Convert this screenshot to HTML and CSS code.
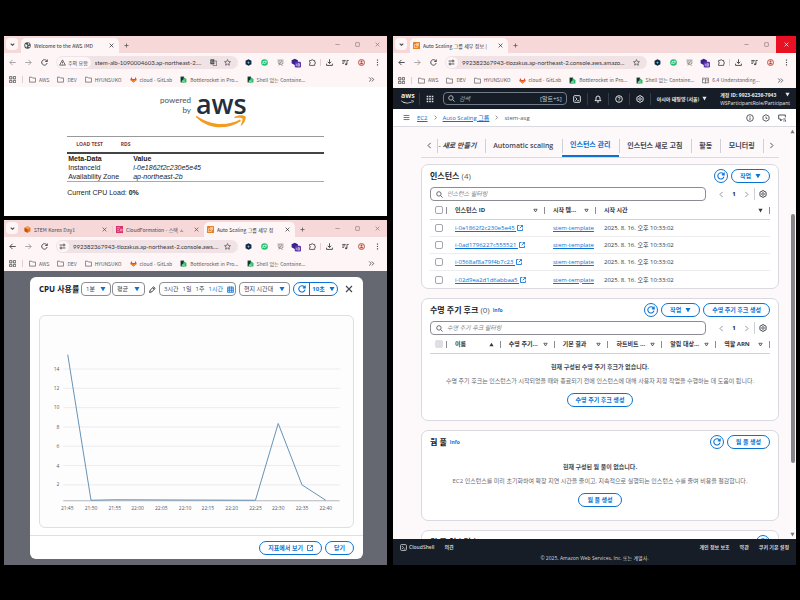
FILE: index.html
```html
<!DOCTYPE html>
<html lang="ko">
<head>
<meta charset="utf-8">
<title>Auto Scaling 모니터링</title>
<link rel="stylesheet" href="styles.css">
</head>
<body>
<svg class="sprite" aria-hidden="true">
  <symbol id="chev" viewBox="0 0 12 12"><path d="M3 4.5l3 3 3-3" fill="none" stroke="currentColor" stroke-width="1.8"/></symbol>
  <symbol id="left" viewBox="0 0 12 12"><path d="M8 1.5L3.5 6 8 10.500" fill="none" stroke="currentColor" stroke-width="1.6"/></symbol>
  <symbol id="right" viewBox="0 0 12 12"><path d="M4 1.500L8.500 6 4 10.500" fill="none" stroke="currentColor" stroke-width="1.600"/></symbol>
  <symbol id="x" viewBox="0 0 12 12"><path d="M1.500 1.500l9 9M10.500 1.500l-9 9" fill="none" stroke="currentColor" stroke-width="1.700"/></symbol>
  <symbol id="plus" viewBox="0 0 12 12"><path d="M6 1v10M1 6h10" fill="none" stroke="currentColor" stroke-width="1.600"/></symbol>
  <symbol id="min" viewBox="0 0 12 12"><path d="M1 6h10" fill="none" stroke="currentColor" stroke-width="1.500"/></symbol>
  <symbol id="max" viewBox="0 0 12 12"><rect x="1.500" y="1.500" width="9" height="9" rx="1" fill="none" stroke="currentColor" stroke-width="1.500"/></symbol>
  <symbol id="back" viewBox="0 0 12 12"><path d="M11.500 6H1.500M6 1.500L1.500 6 6 10.500" fill="none" stroke="currentColor" stroke-width="1.600"/></symbol>
  <symbol id="fwd" viewBox="0 0 12 12"><path d="M.5 6h10M6 1.500L10.500 6 6 10.500" fill="none" stroke="currentColor" stroke-width="1.600"/></symbol>
  <symbol id="reload" viewBox="0 0 12 12"><path d="M10.500 7A4.700 4.700 0 1 1 9.500 2.800L10.500 4M10.800 .8V4.300H7.300" fill="none" stroke="currentColor" stroke-width="1.600"/></symbol>
  <symbol id="globe" viewBox="0 0 12 12"><circle cx="6" cy="6" r="5.500" fill="#474b50"/><path d="M2 3.500l3 1 1 2-1.500 1.500v2L2.500 8zM7 1.500l2.500 1.500-1 1.500-2-.5zM8 6.500l2.500.5-1.500 2.500-1.500-1z" fill="#fff"/></symbol>
  <symbol id="warn" viewBox="0 0 12 12"><path d="M6 1.500L11 10.500H1zM6 4.500v3M6 8.200v1.200" fill="none" stroke="currentColor" stroke-width="1.300"/></symbol>
  <symbol id="tune" viewBox="0 0 12 12"><path d="M1 3.500h5M6 8.500h5" stroke="currentColor" stroke-width="1.500"/><circle cx="8.500" cy="3.500" r="1.700" fill="none" stroke="currentColor" stroke-width="1.500"/><circle cx="3.500" cy="8.500" r="1.700" fill="none" stroke="currentColor" stroke-width="1.500"/></symbol>
  <symbol id="translate" viewBox="0 0 12 12"><rect x=".5" y=".5" width="7" height="8.500" rx="1" fill="#474b50"/><path d="M8 3.500h3.500v8H5.500L5 9.500" fill="none" stroke="#474b50" stroke-width="1.200"/><path d="M5.500 3.500A2 2 0 1 0 5.800 5H4.200M7.500 6h3M9 5v1M8 9.500l2.500-3" fill="none" stroke="#ccc" stroke-width=".9"/></symbol>
  <symbol id="star" viewBox="0 0 12 12"><path d="M6 1l1.500 3.300 3.600.4-2.700 2.400.8 3.600L6 8.900l-3.200 1.800.8-3.600L.9 4.700l3.600-.4z" fill="none" stroke="currentColor" stroke-width="1.200"/></symbol>
  <symbol id="e1" viewBox="0 0 12 12"><path d="M6 .5l5 2.500v6L6 11.500 1 9V3z" fill="#10283f"/><path d="M6 3.500l1 2 2 .5-2 1-1 2-1-2-2-1 2-.5z" fill="#6fb1d8"/></symbol>
  <symbol id="e2" viewBox="0 0 12 12"><circle cx="6" cy="6" r="5.700" fill="#20c070"/><path d="M3 8.500C3 5 5 3.500 9 3.500 9 7 7 8.500 4.500 7.500M3 4.500h2" fill="none" stroke="#fff" stroke-width="1.300"/></symbol>
  <symbol id="e3" viewBox="0 0 12 12"><path d="M1 2h10M1 5h4M7 5h4M3 11l4-7M2 7l8 4M8 8l3-1" fill="none" stroke="#666" stroke-width="1.200"/></symbol>
  <symbol id="e4" viewBox="0 0 16 16"><path d="M6 1l5 2.500v5L6 11 1 8.500v-5z" fill="#37228b"/><rect x="6" y="6" width="10" height="9" rx="2" fill="#5a35a8"/><path d="M8.500 9v4M11 9h2.500v4H11zM11 11h2.500" fill="none" stroke="#e7dcff" stroke-width="1"/></symbol>
  <symbol id="puzzle" viewBox="0 0 12 12"><path d="M1 2.500h3C4 .5 7 .5 7 2.500h2.800v3c2 0 2 2.500 0 2.500v3H1V8c2 0 2-2.500 0-2.500z" fill="none" stroke="currentColor" stroke-width="1.400"/></symbol>
  <symbol id="down" viewBox="0 0 12 12"><path d="M6 .5v7M3 4.800L6 7.700l3-2.900M1 8v3h10V8" fill="none" stroke="currentColor" stroke-width="1.600"/></symbol>
  <symbol id="music" viewBox="0 0 12 12"><path d="M.5 2.500h6M.5 5h5M.5 7.500h3M8.500 9V2.500h3" fill="none" stroke="currentColor" stroke-width="1.500"/><circle cx="7" cy="9" r="1.800" fill="currentColor"/></symbol>
  <symbol id="me" viewBox="0 0 12 12"><circle cx="6" cy="6" r="5.200" fill="#f6dcd6" stroke="#bd3d35" stroke-width="1.400"/><circle cx="6" cy="4.200" r="1.500" fill="#bd3d35"/><path d="M3.500 9c0-3.500 5-3.500 5 0z" fill="#bd3d35"/></symbol>
  <symbol id="dots" viewBox="0 0 12 12"><path d="M5 1h2v2H5zM5 5h2v2H5zM5 9h2v2H5z" fill="currentColor"/></symbol>
  <symbol id="apps" viewBox="0 0 12 12"><path d="M1 1h4v4H1zM7.500 1h4v4h-4zM1 7.500h4v4H1zM7.500 7.500h4v4h-4z" fill="none" stroke="currentColor" stroke-width="1.300"/></symbol>
  <symbol id="folder" viewBox="0 0 12 12"><path d="M.7 2h4l1.300 1.500h5.300v7H.7z" fill="none" stroke="currentColor" stroke-width="1.200"/></symbol>
  <symbol id="gitlab" viewBox="0 0 12 12"><path d="M6 11L.5 7 2.300 1.500 4 5h4l1.700-3.500L11.500 7z" fill="#e2432a"/><path d="M6 11L1 7l3-1 2 2 2-2 3 1z" fill="#f88a26"/></symbol>
  <symbol id="bottle" viewBox="0 0 12 12"><path d="M1 1h6v10H1z" fill="#14332a"/><path d="M6 2l5 3v6H5z" fill="#29b765"/><path d="M3 8l5-3v6H3z" fill="#6bdc8f"/></symbol>
  <symbol id="book" viewBox="0 0 12 12"><path d="M6 2.500C4.500 1.500 2.500 1.500.7 2v8c1.800-.5 3.800-.5 5.300.5 1.500-1 3.500-1 5.300-.5V2C9.500 1.500 7.500 1.500 6 2.500zM6 2.500v8M8 4.500h2M8 6.500h2M2 4.500h2" fill="none" stroke="currentColor" stroke-width="1.200"/></symbol>
  <symbol id="more" viewBox="0 0 12 12"><path d="M2 2.500L5.500 6 2 9.500M6.500 2.500L10 6 6.500 9.500" fill="none" stroke="currentColor" stroke-width="1.400"/></symbol>
  <symbol id="ec2" viewBox="0 0 12 12"><rect width="12" height="12" rx="1" fill="#e98023"/><path d="M2.500 4.500h5v5h-5zM5 2.500h4.500V7M5 7l4-4" fill="none" stroke="#fff3e2" stroke-width="1"/></symbol>
  <symbol id="cfn" viewBox="0 0 12 12"><rect width="12" height="12" fill="#d6336c"/><path d="M2 3h5M2 6h3M2 9h4M7.500 5.500h3v3h-3z" fill="none" stroke="#ffd0de" stroke-width="1"/></symbol>
  <symbol id="cube" viewBox="0 0 12 12"><path d="M6 .5l5 2.500v6L6 11.500 1 9V3z" fill="#e4781a"/><path d="M1 3l5 2.500L11 3 6 .5z" fill="#f5a33f"/><path d="M6 5.500v6L1 9V3z" fill="#c94c18"/></symbol>
  <symbol id="grid9" viewBox="0 0 12 12"><path d="M1 1h2.400v2.400H1zM4.800 1h2.400v2.400H4.800zM8.600 1H11v2.400H8.600zM1 4.800h2.400v2.400H1zM4.800 4.800h2.400v2.400H4.800zM8.600 4.800H11v2.400H8.600zM1 8.600h2.400V11H1zM4.800 8.600h2.400V11H4.800zM8.600 8.600H11V11H8.600z" fill="currentColor"/></symbol>
  <symbol id="search" viewBox="0 0 12 12"><circle cx="5" cy="5" r="3.800" fill="none" stroke="currentColor" stroke-width="1.500"/><path d="M7.800 7.800l3.500 3.500" stroke="currentColor" stroke-width="1.500"/></symbol>
  <symbol id="shell" viewBox="0 0 12 12"><rect x="1" y="1" width="10" height="10" rx="1.500" fill="none" stroke="currentColor" stroke-width="1.400"/><path d="M3.500 3.500L6 6 3.500 8.500M6.500 8.500h2.500" fill="none" stroke="currentColor" stroke-width="1.300"/></symbol>
  <symbol id="bell" viewBox="0 0 12 12"><path d="M1.500 8.500L3 6.500V4.500a3 3 0 0 1 6 0v2l1.500 2zM4.500 10.500h3" fill="none" stroke="currentColor" stroke-width="1.500"/></symbol>
  <symbol id="help" viewBox="0 0 12 12"><circle cx="6" cy="6" r="5" fill="none" stroke="currentColor" stroke-width="1.400"/><path d="M4.300 4.700c0-2.200 3.500-2 3.500 0C7.800 6 6 5.800 6 7.200M6 8.200v1.200" fill="none" stroke="currentColor" stroke-width="1.300"/></symbol>
  <symbol id="gear" viewBox="0 0 12 12"><path d="M6 .8l4.600 2.600v5.200L6 11.200 1.400 8.600V3.400z" fill="none" stroke="currentColor" stroke-width="1.500" stroke-linejoin="round"/><circle cx="6" cy="6" r="1.900" fill="none" stroke="currentColor" stroke-width="1.300"/></symbol>
  <symbol id="menu" viewBox="0 0 12 12"><path d="M1 2.500h10M1 6h10M1 9.500h10" stroke="currentColor" stroke-width="1.400"/></symbol>
  <symbol id="info" viewBox="0 0 12 12"><circle cx="6" cy="6" r="5" fill="none" stroke="currentColor" stroke-width="1.300"/><path d="M6 5.200V9M6 3v1.300" stroke="currentColor" stroke-width="1.300"/></symbol>
  <symbol id="clock" viewBox="0 0 12 12"><path d="M6 1l4.500 2.500v5L6 11 1.500 8.500v-5zM6 4v2.500h2" fill="none" stroke="currentColor" stroke-width="1.300"/></symbol>
  <symbol id="feedback" viewBox="0 0 12 12"><path d="M11 5V1.500H1v6h3v3l2.500-3M8 7.500h3.500M8 10.500h1.500M11 9v2.500" fill="none" stroke="currentColor" stroke-width="1.400"/></symbol>
  <symbol id="tri" viewBox="0 0 12 12"><path d="M1 2h10L6 10.500z" fill="currentColor"/></symbol>
  <symbol id="triup" viewBox="0 0 12 12"><path d="M1 10h10L6 1.500z" fill="currentColor"/></symbol>
  <symbol id="trio" viewBox="0 0 12 12"><path d="M2 3h8L6 9.500z" fill="none" stroke="currentColor" stroke-width="1.800"/></symbol>
  <symbol id="ext" viewBox="0 0 12 12"><path d="M5 1H1v10h10V7M7 1h4v4M11 1L5.500 6.500" fill="none" stroke="currentColor" stroke-width="1.700"/></symbol>
  <symbol id="pen" viewBox="0 0 12 12"><path d="M1 11l1-4L8 1.500 10.500 4 5 10zM6.500 3l2.500 2.500" fill="none" stroke="currentColor" stroke-width="1.400"/></symbol>
  <symbol id="cal" viewBox="0 0 12 12"><path d="M1 2h10v9H1zM1 5h10M4 .5v10M8 .5v10M1 8h10" fill="none" stroke="currentColor" stroke-width="1.300"/></symbol>
  <symbol id="smile" viewBox="0 0 51 13"><path d="M1 1C15 11 32 11 44 4.500l1 1.500C32 15 13 15 .3 2.500-.2 1.500.3.500 1 1z" fill="currentColor"/><path d="M38.500 2c4-2.500 9-2 11-.5 1 2-1 6.500-4 9-.8.500-1 0-.7-.7 1-2.300 2.300-5 1.500-6.300-1-1-4-.8-7-.5-.9 0-1.200-.6-.8-1z" fill="currentColor"/></symbol>
</svg>

<main class="desktop">
  <div class="column">
    <section class="window imd">
      <header class="chrome">
        <div class="tabstrip">
          <button class="tabmenu" aria-label="탭 검색"><svg><use href="#chev"/></svg></button>
          <div class="tab active"><svg><use href="#globe"/></svg><span>Welcome to the AWS IMD</span><button aria-label="탭 닫기"><svg><use href="#x"/></svg></button></div>
          <button class="newtab" aria-label="새 탭"><svg><use href="#plus"/></svg></button>
          <div class="winctl"><button aria-label="최소화"><svg><use href="#min"/></svg></button><button aria-label="최대화"><svg><use href="#max"/></svg></button><button aria-label="닫기"><svg><use href="#x"/></svg></button></div>
        </div>
        <div class="toolbar">
          <button class="dim" aria-label="뒤로"><svg><use href="#back"/></svg></button><button class="dim" aria-label="앞으로"><svg><use href="#fwd"/></svg></button><button aria-label="새로고침"><svg><use href="#reload"/></svg></button>
          <div class="url"><span class="chip"><svg><use href="#warn"/></svg>주의 요함</span><input aria-label="주소" value="stem-alb-1090004603.ap-northeast-2...."><svg><use href="#translate"/></svg><svg><use href="#star"/></svg></div>
          <button aria-label="확장 1"><svg><use href="#e1"/></svg></button><button aria-label="확장 2"><svg><use href="#e2"/></svg></button><button aria-label="확장 3"><svg><use href="#e3"/></svg></button><button class="wide" aria-label="확장 4"><svg><use href="#e4"/></svg></button><button aria-label="확장 프로그램"><svg><use href="#puzzle"/></svg></button><i class="sep"></i><button aria-label="다운로드"><svg><use href="#down"/></svg></button><button aria-label="미디어"><svg><use href="#music"/></svg></button><button aria-label="프로필"><svg><use href="#me"/></svg></button><button aria-label="메뉴"><svg><use href="#dots"/></svg></button>
        </div>
        <nav class="bookmarks">
          <svg><use href="#apps"/></svg><i class="sep"></i>
          <a href="#"><svg><use href="#folder"/></svg>AWS</a><a href="#"><svg><use href="#folder"/></svg>DEV</a><a href="#"><svg><use href="#folder"/></svg>HYUNSUKO</a><a href="#"><svg><use href="#gitlab"/></svg>cloud · GitLab</a><a href="#"><svg><use href="#bottle"/></svg>Bottlerocket in Pro...</a><a href="#"><svg><use href="#bottle"/></svg>Shell 없는 Containe...</a>
          <svg class="last"><use href="#more"/></svg>
        </nav>
      </header>
      <div class="imd-page">
        <div class="brand"><span class="powered">powered<br>by</span><span class="logo">aws<svg><use href="#smile"/></svg></span></div>
        <div class="imd-body">
          <nav class="imd-nav"><a href="#">LOAD TEST</a><a href="#">RDS</a></nav>
          <table class="meta">
            <tr><th>Meta-Data</th><th>Value</th></tr>
            <tr><td>InstanceId</td><td><em>i-0e1862f2c230e5e45</em></td></tr>
            <tr><td>Availability Zone</td><td><em>ap-northeast-2b</em></td></tr>
          </table>
          <p>Current CPU Load: <b>0%</b></p>
        </div>
      </div>
    </section>

    <section class="window metrics">
      <header class="chrome">
        <div class="tabstrip">
          <button class="tabmenu" aria-label="탭 검색"><svg><use href="#chev"/></svg></button>
          <div class="tab"><svg><use href="#cube"/></svg><span>STEM Korea Day1</span><button aria-label="탭 닫기"><svg><use href="#x"/></svg></button></div>
          <i class="sep"></i>
          <div class="tab"><svg><use href="#cfn"/></svg><span>CloudFormation - 스택 ㅅ</span><button aria-label="탭 닫기"><svg><use href="#x"/></svg></button></div>
          <div class="tab active"><svg><use href="#ec2"/></svg><span>Auto Scaling 그룹 세부 정</span><button aria-label="탭 닫기"><svg><use href="#x"/></svg></button></div>
          <button class="newtab" aria-label="새 탭"><svg><use href="#plus"/></svg></button>
          <div class="winctl"><button aria-label="최소화"><svg><use href="#min"/></svg></button><button aria-label="최대화"><svg><use href="#max"/></svg></button><button aria-label="닫기"><svg><use href="#x"/></svg></button></div>
        </div>
        <div class="toolbar">
          <button aria-label="뒤로"><svg><use href="#back"/></svg></button><button class="dim" aria-label="앞으로"><svg><use href="#fwd"/></svg></button><button aria-label="새로고침"><svg><use href="#reload"/></svg></button>
          <div class="url"><span class="chip"><svg><use href="#tune"/></svg></span><input aria-label="주소" value="992382367943-tlozakus.ap-northeast-2.console.aws...."><svg><use href="#star"/></svg></div>
          <button aria-label="확장 1"><svg><use href="#e1"/></svg></button><button aria-label="확장 2"><svg><use href="#e2"/></svg></button><button aria-label="확장 3"><svg><use href="#e3"/></svg></button><button class="wide" aria-label="확장 4"><svg><use href="#e4"/></svg></button><button aria-label="확장 프로그램"><svg><use href="#puzzle"/></svg></button><i class="sep"></i><button aria-label="다운로드"><svg><use href="#down"/></svg></button><button aria-label="미디어"><svg><use href="#music"/></svg></button><button aria-label="프로필"><svg><use href="#me"/></svg></button><button aria-label="메뉴"><svg><use href="#dots"/></svg></button>
        </div>
        <nav class="bookmarks">
          <svg><use href="#apps"/></svg><i class="sep"></i>
          <a href="#"><svg><use href="#folder"/></svg>AWS</a><a href="#"><svg><use href="#folder"/></svg>DEV</a><a href="#"><svg><use href="#folder"/></svg>HYUNSUKO</a><a href="#"><svg><use href="#gitlab"/></svg>cloud · GitLab</a><a href="#"><svg><use href="#bottle"/></svg>Bottlerocket in Pro...</a><a href="#"><svg><use href="#bottle"/></svg>Shell 없는 Containe...</a>
          <svg class="last"><use href="#more"/></svg>
        </nav>
      </header>
      <div class="overlay">
        <div class="modal">
          <div class="modal-head">
            <h2>CPU 사용률</h2>
            <label class="pick"><select aria-label="기간"><option>1분</option></select><svg><use href="#tri"/></svg></label>
            <label class="pick"><select aria-label="통계"><option>평균</option></select><svg><use href="#tri"/></svg></label>
            <button class="pen" aria-label="편집"><svg><use href="#pen"/></svg></button>
            <div class="range"><button>3시간</button><button>1일</button><button>1주</button><button class="on">1시간</button><button class="on" aria-label="달력"><svg><use href="#cal"/></svg></button></div>
            <label class="pick zone"><select aria-label="시간대"><option>현지 시간대</option></select><svg><use href="#tri"/></svg></label>
            <div class="auto"><button aria-label="새로고침"><svg class="lg"><use href="#reload"/></svg></button><button class="every">10초<svg><use href="#tri"/></svg></button></div>
            <button class="close" aria-label="닫기"><svg class="lg"><use href="#x"/></svg></button>
          </div>
          <div class="chart">
            <svg viewBox="0 0 315 213" role="img" aria-label="CPU 사용률">
              <path class="gl" d="M23 53.500h279M23 73h279M23 92.500h279M23 112h279M23 131.500h279M23 151h279M23 170.500h279"/>
              <path class="ax" d="M23 186.500h279"/>
              <path class="ln" d="M27.500 39L51 186 75 185.500 217 186 240 108.500 264 170.500 288 186"/>
              <g class="yl"><text x="19" y="56">14</text><text x="19" y="75">12</text><text x="19" y="94">10</text><text x="19" y="114">8</text><text x="19" y="133">6</text><text x="19" y="153">4</text><text x="19" y="172">2</text></g>
              <g class="xl"><text x="27" y="196">21:45</text><text x="51" y="196">21:50</text><text x="75" y="196">21:55</text><text x="98" y="196">22:00</text><text x="122" y="196">22:05</text><text x="146" y="196">22:10</text><text x="169" y="196">22:15</text><text x="193" y="196">22:20</text><text x="217" y="196">22:25</text><text x="240" y="196">22:30</text><text x="264" y="196">22:35</text><text x="288" y="196">22:40</text></g>
            </svg>
          </div>
          <div class="modal-foot"><button class="pill">지표에서 보기<svg><use href="#ext"/></svg></button><button class="pill">닫기</button></div>
        </div>
      </div>
    </section>
  </div>

  <section class="window console">
    <header class="chrome">
      <div class="tabstrip">
        <button class="tabmenu" aria-label="탭 검색"><svg><use href="#chev"/></svg></button>
        <div class="tab active"><svg><use href="#ec2"/></svg><span>Auto Scaling 그룹 세부 정보 |</span><button aria-label="탭 닫기"><svg><use href="#x"/></svg></button></div>
        <button class="newtab" aria-label="새 탭"><svg><use href="#plus"/></svg></button>
        <div class="winctl"><button aria-label="최소화"><svg><use href="#min"/></svg></button><button aria-label="최대화"><svg><use href="#max"/></svg></button><button class="red" aria-label="닫기"><svg><use href="#x"/></svg></button></div>
      </div>
      <div class="toolbar">
        <button aria-label="뒤로"><svg><use href="#back"/></svg></button><button class="dim" aria-label="앞으로"><svg><use href="#fwd"/></svg></button><button aria-label="새로고침"><svg><use href="#reload"/></svg></button>
        <div class="url"><span class="chip"><svg><use href="#tune"/></svg></span><input aria-label="주소" value="992382367943-tlozakus.ap-northeast-2.console.aws.amazo..."><svg><use href="#star"/></svg></div>
        <button aria-label="확장 1"><svg><use href="#e1"/></svg></button><button aria-label="확장 2"><svg><use href="#e2"/></svg></button><button aria-label="확장 3"><svg><use href="#e3"/></svg></button><button class="wide" aria-label="확장 4"><svg><use href="#e4"/></svg></button><button aria-label="확장 프로그램"><svg><use href="#puzzle"/></svg></button><i class="sep"></i><button aria-label="다운로드"><svg><use href="#down"/></svg></button><button aria-label="미디어"><svg><use href="#music"/></svg></button><button aria-label="프로필"><svg><use href="#me"/></svg></button><button aria-label="메뉴"><svg><use href="#dots"/></svg></button>
      </div>
      <nav class="bookmarks">
        <svg><use href="#apps"/></svg><i class="sep"></i>
        <a href="#"><svg><use href="#folder"/></svg>AWS</a><a href="#"><svg><use href="#folder"/></svg>DEV</a><a href="#"><svg><use href="#folder"/></svg>HYUNSUKO</a><a href="#"><svg><use href="#gitlab"/></svg>cloud · GitLab</a><a href="#"><svg><use href="#bottle"/></svg>Bottlerocket in Pro...</a><a href="#"><svg><use href="#bottle"/></svg>Shell 없는 Containe...</a><a href="#"><svg><use href="#book"/></svg>6.4 Understanding...</a>
        <svg class="last"><use href="#more"/></svg>
      </nav>
    </header>

    <div class="awsbar">
      <a class="awslogo" href="#">aws<svg><use href="#smile"/></svg></a>
      <button class="services" aria-label="서비스"><svg class="lg"><use href="#grid9"/></svg></button>
      <label class="awssearch"><svg><use href="#search"/></svg><input aria-label="검색" placeholder="검색"><span>[알트+S]</span></label>
      <button class="tool" aria-label="CloudShell"><svg class="lg"><use href="#shell"/></svg></button><button class="tool" aria-label="알림"><svg class="lg"><use href="#bell"/></svg></button><button class="tool" aria-label="도움말"><svg class="lg"><use href="#help"/></svg></button><button class="tool" aria-label="설정"><svg class="lg"><use href="#gear"/></svg></button>
      <button class="region">아시아 태평양 (서울)<svg class="sm"><use href="#tri"/></svg></button>
      <button class="account"><b>계정 ID: 9923-6236-7943<svg class="sm"><use href="#tri"/></svg></b><span>WSParticipantRole/Participant</span></button>
    </div>
    <nav class="crumbs">
      <svg><use href="#menu"/></svg><a href="#">EC2</a><svg class="sm"><use href="#right"/></svg><a href="#">Auto Scaling 그룹</a><svg class="sm"><use href="#right"/></svg><span>stem-asg</span>
      <div class="aside"><svg class="lg"><use href="#info"/></svg><svg class="lg"><use href="#clock"/></svg><svg class="lg"><use href="#feedback"/></svg></div>
    </nav>

    <div class="view">
      <div class="content">
        <div class="tabs">
          <button class="arrow" aria-label="이전"><svg><use href="#left"/></svg></button>
          <button class="cut"><em>- 새로 만들기</em></button><button>Automatic scaling</button><button class="on">인스턴스 관리</button><button>인스턴스 새로 고침</button><button>활동</button><button>모니터링</button>
          <button class="arrow" aria-label="다음"><svg><use href="#right"/></svg></button>
        </div>

        <article class="card">
          <div class="card-head"><h3>인스턴스 <span>(4)</span></h3><button class="round" aria-label="새로고침"><svg class="lg"><use href="#reload"/></svg></button><button class="pill">작업<svg><use href="#tri"/></svg></button></div>
          <div class="filter"><label><svg><use href="#search"/></svg><input aria-label="인스턴스 필터링" placeholder="인스턴스 필터링"></label><div class="pager"><svg><use href="#left"/></svg><b>1</b><svg><use href="#right"/></svg></div><button class="gear" aria-label="기본 설정"><svg class="lg"><use href="#gear"/></svg></button></div>
          <table class="grid">
            <colgroup><col class="c-check"><col class="c-id"><col class="c-tpl"><col></colgroup>
            <thead><tr><th><div><input type="checkbox" aria-label="모두 선택"></div></th><th><div>인스턴스 ID<svg><use href="#trio"/></svg></div></th><th><div>시작 템...<svg><use href="#trio"/></svg></div></th><th><div>시작 시간<svg><use href="#tri"/></svg></div></th></tr></thead>
            <tbody>
              <tr><td><input type="checkbox" aria-label="i-0e1862f2c230e5e45"></td><td><a href="#">i-0e1862f2c230e5e45 <svg><use href="#ext"/></svg></a></td><td><a href="#">stem-template</a></td><td>2025. 8. 16. 오후 10:33:02</td></tr>
              <tr><td><input type="checkbox" aria-label="i-0ad1796227c555521"></td><td><a href="#">i-0ad1796227c555521 <svg><use href="#ext"/></svg></a></td><td><a href="#">stem-template</a></td><td>2025. 8. 16. 오후 10:33:02</td></tr>
              <tr><td><input type="checkbox" aria-label="i-0568af8a79f4b7c23"></td><td><a href="#">i-0568af8a79f4b7c23 <svg><use href="#ext"/></svg></a></td><td><a href="#">stem-template</a></td><td>2025. 8. 16. 오후 10:33:02</td></tr>
              <tr><td><input type="checkbox" aria-label="i-02d9ea2d1d6abbaa5"></td><td><a href="#">i-02d9ea2d1d6abbaa5 <svg><use href="#ext"/></svg></a></td><td><a href="#">stem-template</a></td><td>2025. 8. 16. 오후 10:33:02</td></tr>
            </tbody>
          </table>
        </article>

        <article class="card">
          <div class="card-head"><h3>수명 주기 후크 <span>(0)</span></h3><a class="info" href="#">Info</a><button class="round" aria-label="새로고침"><svg class="lg"><use href="#reload"/></svg></button><button class="pill">작업<svg><use href="#tri"/></svg></button><button class="pill">수명 주기 후크 생성</button></div>
          <div class="filter"><label><svg><use href="#search"/></svg><input aria-label="수명 주기 후크 필터링" placeholder="수명 주기 후크 필터링"></label><div class="pager"><svg><use href="#left"/></svg><b>1</b><svg><use href="#right"/></svg></div><button class="gear" aria-label="기본 설정"><svg class="lg"><use href="#gear"/></svg></button></div>
          <table class="grid">
            <colgroup><col class="c-check"><col><col><col><col><col><col></colgroup>
            <thead><tr><th><div><input type="checkbox" disabled aria-label="모두 선택"></div></th><th><div>이름<svg><use href="#triup"/></svg></div></th><th><div>수명 주기...<svg><use href="#trio"/></svg></div></th><th><div>기본 결과<svg><use href="#trio"/></svg></div></th><th><div>하트비트 ...<svg><use href="#trio"/></svg></div></th><th><div>알림 대상...<svg><use href="#trio"/></svg></div></th><th><div>역할 ARN<svg><use href="#trio"/></svg></div></th></tr></thead>
          </table>
          <div class="empty"><b>현재 구성된 수명 주기 후크가 없습니다.</b><p>수명 주기 후크는 인스턴스가 시작되었을 때와 종료되기 전에 인스턴스에 대해 사용자 지정 작업을 수행하는 데 도움이 됩니다.</p><button class="pill">수명 주기 후크 생성</button></div>
        </article>

        <article class="card">
          <div class="card-head"><h3>웜 풀</h3><a class="info" href="#">Info</a><button class="round" aria-label="새로고침"><svg class="lg"><use href="#reload"/></svg></button><button class="pill">웜 풀 생성</button></div>
          <div class="empty roomy"><b>현재 구성된 웜 풀이 없습니다.</b><p>EC2 인스턴스를 미리 초기화하여 확장 지연 시간을 줄이고, 지속적으로 실행되는 인스턴스 수를 줄여 비용을 절감합니다.</p><button class="pill">웜 풀 생성</button></div>
        </article>

        <article class="card">
          <div class="card-head"><h3>웜 풀 인스턴스 <span>(0)</span></h3><button class="round" aria-label="새로고침"><svg class="lg"><use href="#reload"/></svg></button></div>
        </article>
      </div>
      <div class="scrollbar"><svg class="sm"><use href="#triup"/></svg><i></i><svg class="sm"><use href="#tri"/></svg></div>
    </div>

    <footer class="awsfoot">
      <div><a href="#"><svg><use href="#shell"/></svg>CloudShell</a><a href="#">의견</a><span class="grow"></span><a href="#">개인 정보 보호</a><a href="#">약관</a><a href="#">쿠키 기본 설정</a></div>
      <p>© 2025, Amazon Web Services, Inc. 또는 계열사.</p>
    </footer>
  </section>
</main>
</body>
</html>
```
FILE: styles.css
```css
* { box-sizing: border-box; }
body { margin: 0; background: #000; color: #16191f; font: 6px/8px "Open Sans", "Noto Sans CJK KR", sans-serif; }
svg { width: 7px; height: 7px; flex: none; display: block; }
svg.sm { width: 5px; height: 5px; }
svg.lg { width: 8px; height: 8px; }
.sprite { display: none; }
button, input, select { font: inherit; color: inherit; background: none; border: 0; padding: 0; margin: 0; }
button { display: flex; align-items: center; justify-content: center; white-space: nowrap; flex: none; }
input { min-width: 0; outline: 0; }
a { color: inherit; text-decoration: none; }
h2, h3, p { margin: 0; }
em { font-style: italic; }

.desktop { display: grid; grid-template-columns: 383fr 403fr; gap: 6px; height: 100vh; padding: 36px 4px 35px; }
.column { display: flex; flex-direction: column; gap: 4px; min-width: 0; min-height: 0; }
.window { display: flex; flex-direction: column; overflow: hidden; min-width: 0; min-height: 0; background: #fff; }
.imd { flex: 180 1 0; }
.metrics { flex: 345 1 0; }

/* browser frame */
.chrome { background: #fdf5f6; color: #45474b; font-family: "Noto Sans CJK KR", sans-serif; font-size: 5px; flex: none; }
.tabstrip { display: flex; align-items: flex-end; height: 17px; background: #f6d8d9; padding-left: 2px; }
.tabmenu { width: 12px; height: 12px; margin: 0 3px 3px 0; border-radius: 4px; background: #fdf5f6; }
.tab { display: flex; align-items: center; gap: 3px; width: 98px; height: 15px; padding: 0 5px 0 3px; }
.tab.active { border-radius: 5px 5px 0 0; background: #fdf5f6; color: #2b2d31; }
.tab span { flex: 1; overflow: hidden; white-space: nowrap; }
.tab button svg, .newtab svg, .winctl svg { width: 5px; height: 5px; }
.tabstrip .sep { margin-bottom: 4px; }
.newtab { width: 15px; height: 15px; }
.winctl { display: flex; margin-left: auto; align-self: stretch; color: #8d7477; }
.winctl button { width: 20px; }
.winctl .red { background: #e81123; color: #fff; }
.sep { width: 1px; height: 7px; background: #e3cfd2; flex: none; }
.toolbar { display: flex; align-items: center; height: 19px; padding-right: 2px; }
.toolbar button { width: 15px; height: 15px; }
.toolbar > button { width: 16px; }
.toolbar .wide svg { width: 10px; height: 10px; }
.dim { color: #a5a0a3; }
.url { display: flex; flex: 1; align-items: center; gap: 7px; height: 13px; margin: 0 2px 0 4px; padding: 0 7px 0 1px; border-radius: 7px; background: #f1e3e5; min-width: 0; }
.url input { flex: 1; width: 20px; height: 10px; margin: 0 -3px; color: #36383c; font-family: Lato, sans-serif; font-size: 6px; }
.chip { display: flex; align-items: center; gap: 2px; height: 11px; padding: 0 3px 0 2px; border-radius: 6px; background: #fdf5f6; white-space: nowrap; }
.bookmarks { display: flex; align-items: center; gap: 6px; height: 15px; padding: 0 12px 0 5px; overflow: hidden; }
.bookmarks a { display: flex; align-items: center; gap: 3px; margin-right: 2px; white-space: nowrap; color: #5c5c60; }
.bookmarks .last { margin-left: auto; }
.metrics .tab { width: 91px; }
.console .bookmarks { height: 16px; }

/* instance metadata page */
.imd-page { flex: 1; font: 7px/9px "Liberation Sans", sans-serif; color: #222; }
.brand { display: flex; justify-content: center; gap: 5px; padding: 8px 0 8px 16px; }
.powered { text-align: right; font: 8px/10px Lato, sans-serif; color: #4b4f56; }
.logo { font: 600 27px/17px "Open Sans", sans-serif; color: #232f3e; }
.logo svg { width: 51px; height: 13px; margin-top: 3px; color: #f39c1f; }
.imd-body { width: 67%; margin: 0 auto; border-top: 1px solid #999; }
.imd-nav { display: flex; gap: 18px; padding: 3px 9px 4px; border-bottom: 2px solid #444; font: 700 5px/8px "Open Sans", sans-serif; color: #80363a; }
.meta { width: 100%; border-spacing: 0; border-bottom: 1px solid #aaa; }
.meta th, .meta td { padding: 0 1px; text-align: left; line-height: 9px; }
.meta th:first-child { width: 65px; }
.imd-body p { padding-top: 6px; }

/* metric dialog */
.overlay { display: flex; flex: 1; min-height: 0; padding: 6px 24px 6px 26px; background: #656871; }
.modal { display: flex; flex-direction: column; flex: 1; min-width: 0; border-radius: 6px; background: #fff; }
.modal-head { display: flex; align-items: center; height: 24px; padding: 0 9px; }
.modal-head h2 { font-size: 8px; line-height: 12px; white-space: nowrap; flex: none; width: 42px; }
.pick { display: flex; align-items: center; height: 14px; padding: 0 4px; gap: 5px; border: 1px solid #8c8c94; border-radius: 4px; color: #424650; flex: none; margin-right: 1px; }
.pick select { appearance: none; line-height: 10px; height: 10px; }
.pick svg, .every svg, .pill svg { width: 6px; height: 6px; color: #0972d3; }
.pen { width: 13px; }
.range { display: flex; flex: 1; align-items: center; justify-content: space-between; height: 14px; padding: 0 1px 0 4px; border: 1px solid #8c8c94; border-radius: 4px; color: #424650; }
.on { color: #0972d3; }
.zone { margin-left: 3px; margin-right: 3px; }
.auto { display: flex; height: 14px; border: 1px solid #0972d3; border-radius: 7px; color: #0972d3; flex: none; }
.auto button { width: 15px; }
.auto .every { width: 28px; gap: 4px; border-left: 1px solid #0972d3; font-weight: 700; }
.close { width: 16px; justify-content: flex-end; padding-right: 1px; color: #424650; }
.chart { flex: 1; min-height: 0; margin: 14px 9px 7px; border: 1px solid #dedee3; border-radius: 6px; background: #fdfdfe; }
.chart svg { width: 100%; height: 100%; }
.gl { stroke: #ececef; fill: none; }
.ax { stroke: #b5b5bb; fill: none; }
.ln { stroke: #6692b3; fill: none; stroke-linejoin: round; }
.yl, .xl { font-size: 5px; fill: #55585f; text-anchor: middle; }
.yl { text-anchor: end; }
.modal-foot { display: flex; align-items: center; justify-content: flex-end; gap: 3px; height: 24px; padding: 0 9px; border-top: 1px solid #dedee3; }

.pill { gap: 4px; height: 14px; padding: 0 8px; border: 1px solid #0972d3; border-radius: 7px; color: #0972d3; font-weight: 700; }
.round { width: 14px; height: 14px; border: 1px solid #0972d3; border-radius: 50%; color: #0972d3; }

/* console bars */
.awsbar { display: flex; align-items: center; height: 21px; padding: 0 6px 0 8px; background: #161d26; color: #e6e8ec; font-size: 5px; flex: none; }
.awslogo { width: 18px; font: 700 7px/6px "Open Sans", sans-serif; }
.awslogo svg { width: 13px; height: 4px; margin-top: 1px; }
.services { width: 24px; padding-right: 4px; border-left: 1px solid #333c49; height: 12px; }
.awssearch { display: flex; flex: 1; align-items: center; gap: 4px; height: 13px; padding: 0 4px; border: 1px solid #727b88; border-radius: 4px; min-width: 0; color: #c5cad2; font-size: 6px; }
.awssearch input { flex: 1; width: 20px; }
input::placeholder { color: #7b7f88; font-style: italic; }
.awssearch input::placeholder { color: #a4acb9; }
.tool { width: 21px; height: 12px; border-right: 1px solid #333c49; }
.region { gap: 3px; padding: 0 6px; font-weight: 600; }
.account { display: block; line-height: 8px; text-align: left; padding-left: 7px; }
.account b { display: flex; align-items: center; justify-content: space-between; }
.crumbs { display: flex; align-items: center; gap: 5px; height: 18px; padding: 0 10px; border-bottom: 1px solid #d9d9df; background: #fff; color: #55585f; flex: none; }
.crumbs a { color: #0972d3; text-decoration: underline; text-underline-offset: 1px; }
.crumbs a:first-of-type { margin-left: 2px; }
.aside { display: flex; gap: 8px; margin-left: auto; color: #424650; }

.view { display: flex; flex: 1; min-height: 0; background: #fdf9fa; }
.content { flex: 1; min-width: 0; padding: 7px 10px 0 28px; overflow: hidden; }
.scrollbar { display: flex; flex-direction: column; align-items: center; width: 7px; padding: 2px 0; color: #77797e; }
.scrollbar i { width: 4px; margin-top: 80px; margin-bottom: auto; height: 61%; border-radius: 2px; background: #86868a; }
.tabs { display: flex; align-items: stretch; justify-content: space-between; height: 24px; margin-bottom: 6px; border-bottom: 1px solid #d9d9df; font-size: 7px; font-weight: 600; color: #424650; }
.tabs button { position: relative; padding: 0 8px; flex: 1 0 auto; }
.tabs .arrow { flex: none; width: 16px; padding: 0; }
.tabs .cut { padding-left: 1px; }
.tabs button + button::before { content: ""; position: absolute; left: 0; top: 5px; height: 14px; border-left: 1px solid #cfcfd6; }
.tabs .on { border-bottom: 2px solid #0972d3; color: #0972d3; }

.card { margin-bottom: 9px; padding: 4px 8px 0; border: 1px solid #d9d9df; border-radius: 7px; background: #fff; }
.card-head { display: flex; align-items: center; gap: 3px; height: 14px; margin-bottom: 4px; }
.card-head h3 { font-size: 8px; line-height: 12px; }
.card-head h3 span { font-weight: 400; color: #55585f; }
.card-head .round { margin-left: auto; }
.info { font-size: 5px; font-weight: 700; color: #0972d3; }
.filter { display: flex; align-items: center; }
.filter label { display: flex; flex: 1; align-items: center; gap: 4px; height: 14px; padding: 0 5px; border: 1px solid #8c8c94; border-radius: 4px; color: #55585f; }
.filter input { flex: 1; }
.pager { display: flex; justify-content: space-between; align-items: center; width: 48px; padding: 0 4px 0 12px; color: #8c8c94; }
.pager b { color: #16191f; }
.gear { width: 16px; height: 12px; border-left: 1px solid #cfcfd6; color: #424650; }
.grid { width: 100%; table-layout: fixed; border-spacing: 0; }
.c-check { width: 17px; }
.c-id { width: 98px; }
.c-tpl { width: 51px; }
.grid th { height: 19px; padding: 0 0 0 8px; border-bottom: 1px solid #cfcfd6; text-align: left; color: #33363d; white-space: nowrap; }
.grid th div { display: flex; align-items: center; justify-content: space-between; height: 7px; padding-right: 6px; border-right: 1px solid #8c8c94; }
.grid th svg { width: 5px; height: 5px; }
.grid td { height: 17px; padding: 0 0 0 8px; border-bottom: 1px solid #ededf0; white-space: nowrap; color: #33363d; }
.grid tr:last-child td { border-bottom: 0; }
.grid th:first-child, .grid td:first-child { padding-left: 5px; }
.grid th:first-child div { padding-right: 0; }
.grid td a { display: inline-block; color: #0972d3; line-height: 8px; text-decoration: underline; text-underline-offset: 1px; }
.grid td a svg { display: inline-block; width: 6px; height: 6px; margin-left: 1px; vertical-align: -1px; }
.grid input { display: block; appearance: none; width: 8px; height: 8px; border: 1px solid #a5a5ad; border-radius: 2px; background: #fff; }
.grid input:disabled { background: #dedee3; border-color: #dedee3; }
.empty { display: flex; flex-direction: column; align-items: center; padding: 9px 0 13px; color: #424650; white-space: nowrap; }
.empty p { margin: 6px 0 8px; color: #656871; }
.empty.roomy { padding-top: 10px; }

.awsfoot { height: 26px; padding: 3px 7px; background: #161d26; color: #d5d8de; font-size: 5px; flex: none; }
.awsfoot div { display: flex; gap: 10px; height: 10px; align-items: center; font-weight: 600; }
.awsfoot a { display: flex; align-items: center; gap: 2px; }
.grow { flex: 1; }
.awsfoot p { margin-top: 2px; text-align: center; }
```
